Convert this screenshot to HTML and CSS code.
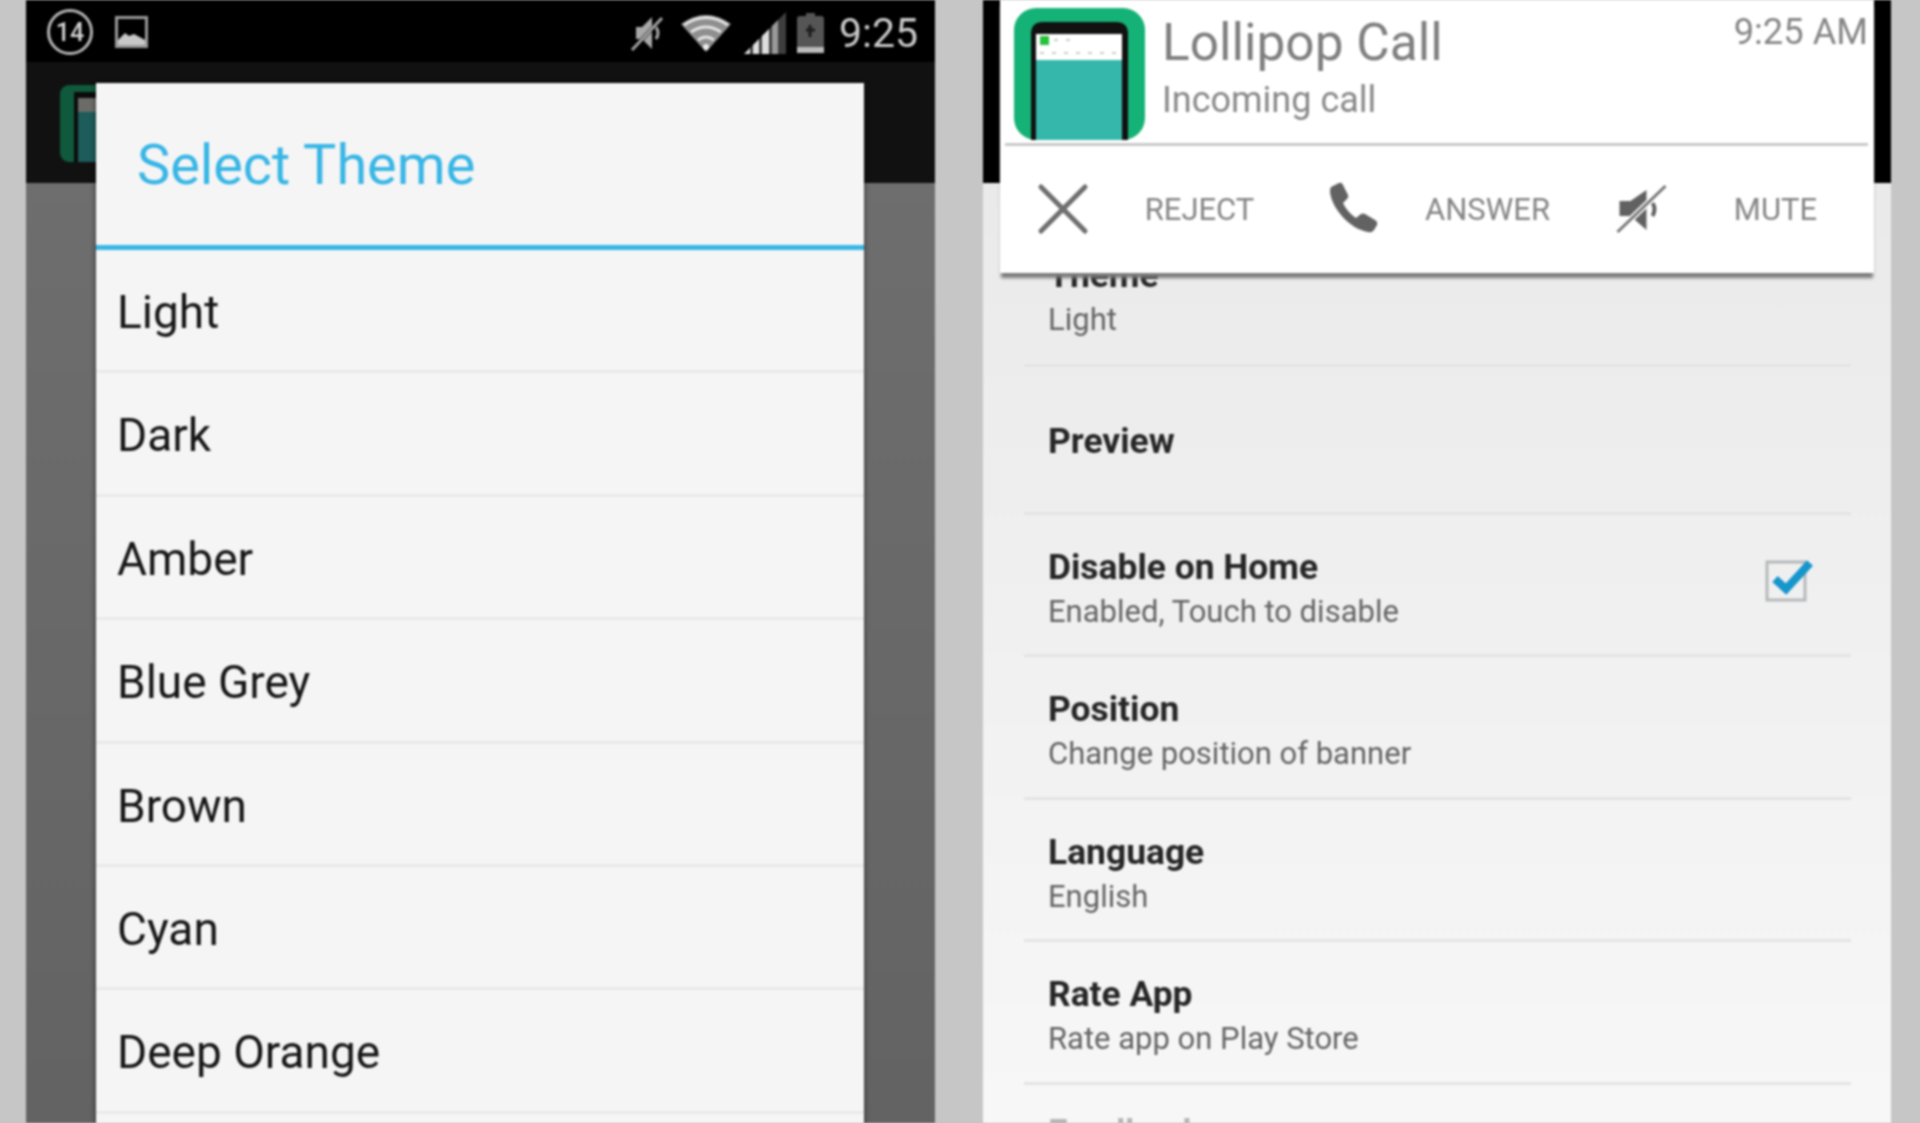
FILE: index.html
```html
<!DOCTYPE html>
<html lang="en">
<head>
<meta charset="utf-8">
<title>Lollipop Call</title>
<link rel="stylesheet" href="styles.css">
</head>
<body>
<main class="stage">
  <section class="phone phone-left">
    <header class="status">
      <div class="status-group">
        <span class="count">14</span>
        <svg class="ico-image" viewBox="0 0 33 32"><rect x="1.5" y="1.5" width="30" height="29" fill="none" stroke="#999" stroke-width="3"/><path d="M3 24l7-7 4 3 5-2 11 6v5H3z" fill="#c8c8c8"/></svg>
      </div>
      <div class="status-group status-right">
        <svg class="ico-mute" viewBox="0 0 35 36"><path d="M7 12h6l10-10v32L13 24H7z" fill="#a8a8a8"/><path d="M27 12q4 6 0 12" fill="none" stroke="#a8a8a8" stroke-width="3"/><path d="M3 35L33 3" stroke="#000" stroke-width="4"/><path d="M3 35L33 3" stroke="#a0a0a0" stroke-width="3"/></svg>
        <svg class="ico-wifi" viewBox="0 0 50 37"><path d="M0 9Q25-9 50 9L25 37z" fill="#8f8f8f"/><path d="M3 10Q25-5 47 10M10 17Q25 7 40 17M17 25Q25 19 33 25" fill="none" stroke="#e4e4e4" stroke-width="3"/><circle cx="25" cy="32" r="3" fill="#eee"/></svg>
        <svg class="ico-signal" viewBox="0 0 42 42"><path d="M0 42L42 0v42z" fill="#3e3e3e"/><path d="M0 42l6-6v6zM9 42V33l6-6v15zM18 42V24l7-7v25z" fill="#ddd"/><path d="M28 42V14l6-6v34z" fill="#999"/></svg>
        <svg class="ico-battery" viewBox="0 0 27 40"><path d="M9 0h9v3h6q3 0 3 3v34H0V6q0-3 3-3h6z" fill="#555"/><rect y="34" width="27" height="6" fill="#bbb"/><path d="M13 12v12M9 17h9" stroke="#1c1c1c" stroke-width="3"/></svg>
        <span class="clock">9:25</span>
      </div>
    </header>
    <div class="appbar">
      <svg class="app-icon-dim" viewBox="0 0 90 77"><rect width="90" height="77" rx="9" fill="#0f5a3c"/><rect x="14" y="7" width="70" height="70" fill="#0b0b0b"/><rect x="18" y="13" width="62" height="64" fill="#1d5c5a"/><rect x="18" y="13" width="62" height="14" fill="#6b6b68"/></svg>
    </div>
    <div class="dim-body"></div>
    <div class="dialog">
      <h2 class="dialog-title">Select Theme</h2>
      <ul class="theme-list">
        <li>Light</li>
        <li>Dark</li>
        <li>Amber</li>
        <li>Blue Grey</li>
        <li>Brown</li>
        <li>Cyan</li>
        <li>Deep Orange</li>
      </ul>
    </div>
  </section>

  <section class="phone phone-right">
    <div class="black-top"></div>
    <div class="settings">
      <div class="row row-theme"><div><h3>Theme</h3><p>Light</p></div></div>
      <div class="row row-preview"><div><h3>Preview</h3></div></div>
      <div class="row"><div><h3>Disable on Home</h3><p>Enabled, Touch to disable</p></div>
        <svg class="checkbox" viewBox="0 0 50 44"><rect x="2" y="4" width="38" height="38" fill="none" stroke="#b5b8ba" stroke-width="3"/><path d="M10 21l11 10L45 5" fill="none" stroke="#1696cc" stroke-width="8"/></svg>
      </div>
      <div class="row"><div><h3>Position</h3><p>Change position of banner</p></div></div>
      <div class="row"><div><h3>Language</h3><p>English</p></div></div>
      <div class="row"><div><h3>Rate App</h3><p>Rate app on Play Store</p></div></div>
      <div class="row row-faded"><div><h3>Feedback</h3></div></div>
    </div>
    <div class="notification">
      <div class="notif-head">
        <svg class="notif-icon" viewBox="0 0 131 132"><rect width="131" height="132" rx="22" fill="#15b277"/><path d="M17 132V26q0-12 12-12h73q12 0 12 12v106z" fill="#111"/><rect x="22" y="26" width="86" height="106" fill="#35b8ab"/><rect x="22" y="26" width="86" height="26" fill="#fff"/><rect x="26" y="28" width="9" height="9" fill="#27c13c"/><path d="M40 32h16M26 45h78" stroke="#ccc" stroke-width="2" stroke-dasharray="4 8"/></svg>
        <div class="notif-text">
          <div class="notif-title">Lollipop Call</div>
          <div class="notif-sub">Incoming call</div>
        </div>
        <div class="notif-time">9:25 AM</div>
      </div>
      <div class="notif-actions">
        <div class="action">
          <svg class="action-icon" viewBox="0 0 50 50"><path d="M3 3l44 44M47 3L3 47" stroke="#6f6f6f" stroke-width="5" stroke-linecap="round"/></svg>
          <span class="action-label">REJECT</span>
        </div>
        <div class="action">
          <svg class="action-icon" viewBox="-3 2 50 50"><path d="M2 5l8-4q3-1 4 2l5 10q1 2-1 4l-4 4q4 9 13 15l5-4q2-1 4 0l10 6q3 2 2 5l-3 5q-2 3-6 2C21 47 3 27 1 10q0-4 1-5z" fill="#626262"/></svg>
          <span class="action-label">ANSWER</span>
        </div>
        <div class="action">
          <svg class="action-icon" viewBox="-2.5 0 50 50"><path d="M3 17h11L30 6v40L14 32H3z" fill="#616161"/><path d="M36 19q4 6 0 13" fill="none" stroke="#616161" stroke-width="4"/><path d="M1 48L49 2" stroke="#fff" stroke-width="6"/><path d="M1 48L49 2" stroke="#777" stroke-width="3"/></svg>
          <span class="action-label">MUTE</span>
        </div>
      </div>
    </div>
  </section>
</main>
</body>
</html>
```
FILE: styles.css
```css
* { box-sizing: border-box; }
html, body { margin: 0; padding: 0; background: #c6c6c6; overflow: hidden; }
h2, h3, p, ul { margin: 0; padding: 0; }
ul { list-style: none; }

.stage {
  display: flex;
  gap: 48px;
  width: 1920px;
  height: 1123px;
  padding-left: 26px;
  overflow: hidden;
  background: #c6c6c6;
  font-family: Roboto, "Liberation Sans", sans-serif;
  filter: blur(1.2px);
}
.phone { position: relative; height: 1123px; overflow: hidden; display: flex; flex-direction: column; }
.phone-left { width: 909px; background: #000; }
.phone-right { width: 908px; }

/* left phone */
.status {
  height: 62px;
  flex: none;
  background: #000;
  display: flex;
  align-items: center;
  justify-content: space-between;
  padding: 2px 17px 0 21px;
}
.status-group { display: flex; align-items: center; }
.count {
  width: 46px;
  height: 46px;
  border: 3px solid #b4b4b4;
  border-radius: 50%;
  color: #d4d4d4;
  font-size: 25px;
  font-weight: 500;
  display: flex;
  align-items: center;
  justify-content: center;
}
.ico-image { width: 33px; height: 32px; margin-left: 22px; }
.status-right { padding-top: 2px; }
.ico-mute { width: 35px; height: 36px; }
.ico-wifi { width: 50px; height: 37px; margin-left: 17px; }
.ico-signal { width: 42px; height: 42px; margin-left: 13px; }
.ico-battery { width: 27px; height: 40px; margin-left: 11px; }
.clock { margin-left: 15px; color: #c9c9c9; font-size: 41px; line-height: 50px; }

.appbar { height: 121px; flex: none; background: #111; padding: 23px 0 0 34px; }
.app-icon-dim { display: block; width: 90px; height: 77px; }
.dim-body { flex: 1; background: linear-gradient(#6e6e6e, #636363); }

.dialog {
  position: absolute;
  left: 70px;
  top: 83px;
  bottom: -20px;
  width: 768px;
  background: #f5f5f5;
  box-shadow: 0 0 5px rgba(0, 0, 0, 0.6);
}
.dialog-title {
  height: 167px;
  padding-left: 41px;
  border-bottom: 5px solid #38b6e6;
  color: #38b6e6;
  font-size: 55.8px;
  font-weight: 400;
  line-height: 165px;
}
.theme-list li {
  height: 123.4px;
  padding-left: 21px;
  border-bottom: 3px solid #e9e9e9;
  color: #161616;
  font-size: 46px;
  line-height: 125px;
}

/* right phone */
.black-top { height: 183px; flex: none; background: #000; }
.settings {
  flex: 1;
  padding: 40px 40px 0 41px;
  background: linear-gradient(#eaeaea, #f9f9f9);
}
.row {
  display: flex;
  align-items: flex-start;
  justify-content: space-between;
  height: 142.5px;
  padding: 33px 36px 0 24px;
  border-bottom: 3px solid #e4e4e4;
}
.row h3 { color: #262626; font-size: 35.4px; font-weight: 700; line-height: 38px; }
.row p { margin-top: 7px; color: #646464; font-size: 31px; line-height: 38px; }
.row-preview { height: 148px; padding-top: 55px; }
.row-theme { height: 143.5px; }
.row-faded { border-bottom: 0; padding-top: 28px; }
.row-faded h3 { color: #b5b5b5; }
.checkbox { width: 50px; height: 44px; margin-top: 10px; }

.notification {
  position: absolute;
  left: 17px;
  top: 0;
  width: 874px;
  height: 273px;
  background: #fff;
  box-shadow: 0 6px 3px -1px #7a7a7a;
}
.notif-head {
  height: 146px;
  margin: 0 6px 0 5px;
  padding: 8px 0 0 9px;
  border-bottom: 3px solid #c9c9c9;
  display: flex;
  align-items: flex-start;
}
.notif-icon { width: 131px; height: 132px; flex: none; }
.notif-text { flex: 1; padding: 1px 0 0 17px; }
.notif-title { color: #7f7f7f; font-size: 51.4px; line-height: 68px; }
.notif-sub { color: #888; font-size: 36px; line-height: 44px; margin-top: 1px; }
.notif-time { color: #868686; font-size: 36.3px; line-height: 44px; margin: 2px 0 0 0; }

.notif-actions { display: flex; gap: 52px; padding: 38px 0 0 38px; }
.action { display: flex; align-items: center; gap: 37px; width: 236px; }
.action-icon { width: 50px; height: 50px; flex: none; overflow: visible; }
.action-label { width: 150px; text-align: center; color: #858585; font-size: 31px; }
```
